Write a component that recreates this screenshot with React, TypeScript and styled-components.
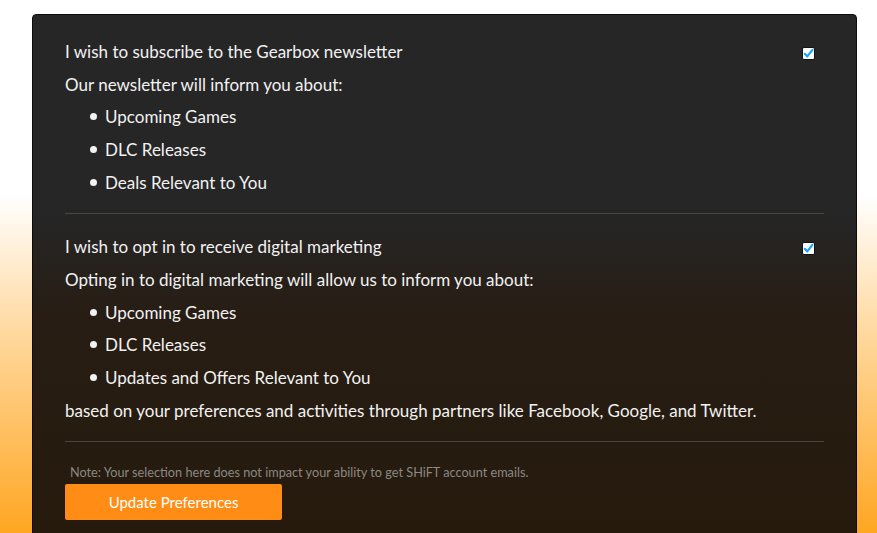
import React from "react";
import styled, { createGlobalStyle } from "styled-components";

const Global = createGlobalStyle`
  html, body { margin: 0; padding: 0; }
  body {
    font-family: Lato, "Noto Sans", "DejaVu Sans", sans-serif;
    background: #ffffff;
  }
`;

const Page = styled.div`
  min-height: 533px;
  height: 533px;
  overflow: hidden;
  box-sizing: border-box;
  padding: 14px 20px 0 32px;
  background: linear-gradient(180deg, #ffffff 0px, #ffffff 195px, #ffd9a0 330px, #ffa622 533px);
`;

const Panel = styled.div`
  width: 825px;
  box-sizing: border-box;
  min-height: 540px;
  border: 1px solid #0c0c0c;
  border-radius: 4px;
  padding: 20px 32px 20px 32px;
  background: linear-gradient(180deg, #262626 0px, #262626 200px, #271d14 300px, #251a0b 540px);
  color: #f2f2f2;
`;

const Section = styled.div`
  display: flex;
  flex-direction: column;
`;

const TitleRow = styled.div`
  display: flex;
  align-items: center;
  justify-content: space-between;
  height: 32.75px;
  font-size: 17px;
`;

const Line = styled.div<{ $indent?: boolean }>`
  height: 32.75px;
  font-size: 17px;
  display: flex;
  align-items: center;
  padding-left: ${(p) => (p.$indent ? "25px" : "0")};
`;

const Bullet = styled.span`
  flex: none;
  width: 7px;
  height: 7px;
  border-radius: 50%;
  background: #f2f2f2;
  margin-right: 8px;
`;

const Divider = styled.hr`
  border: 0;
  height: 1px;
  background: #4a4540;
  margin: 14.5px 0 16px 0;
  width: 100%;
`;

const Box = styled.span`
  width: 13px;
  height: 13px;
  box-sizing: border-box;
  background: #ffffff;
  border: 1px solid #111;
  border-radius: 2px;
  margin-right: 9px;
  margin-top: 4px;
  display: flex;
  align-items: center;
  justify-content: center;
`;

const Note = styled.div`
  font-size: 12.7px;
  color: #8c8884;
  padding-left: 5px;
  margin-top: 22px;
  line-height: 16px;
`;

const Button = styled.button`
  margin-top: 4px;
  width: 217px;
  height: 36px;
  border: 0;
  border-radius: 2px;
  background: #ff8c14;
  color: #ffffff;
  font-family: inherit;
  font-size: 15px;
  cursor: pointer;
`;

const Check = () => (
  <Box>
    <svg width="11" height="11" viewBox="0 0 11 11">
      <path d="M1.8 5.8 L4.3 8.4 L9.4 1.8" fill="none" stroke="#19a2ff" strokeWidth="2.2" strokeLinecap="round" strokeLinejoin="round" />
    </svg>
  </Box>
);

const Item = ({ children }: { children: React.ReactNode }) => (
  <Line $indent>
    <Bullet />
    {children}
  </Line>
);

export default function App() {
  return (
    <>
      <Global />
      <Page>
        <Panel>
          <Section>
            <TitleRow>
              <span>I wish to subscribe to the Gearbox newsletter</span>
              <Check />
            </TitleRow>
            <Line>Our newsletter will inform you about:</Line>
            <Item>Upcoming Games</Item>
            <Item>DLC Releases</Item>
            <Item>Deals Relevant to You</Item>
          </Section>
          <Divider />
          <Section>
            <TitleRow>
              <span>I wish to opt in to receive digital marketing</span>
              <Check />
            </TitleRow>
            <Line>Opting in to digital marketing will allow us to inform you about:</Line>
            <Item>Upcoming Games</Item>
            <Item>DLC Releases</Item>
            <Item>Updates and Offers Relevant to You</Item>
            <Line>based on your preferences and activities through partners like Facebook, Google, and Twitter.</Line>
          </Section>
          <Divider />
          <Note>Note: Your selection here does not impact your ability to get SHiFT account emails.</Note>
          <Button>Update Preferences</Button>
        </Panel>
      </Page>
    </>
  );
}
